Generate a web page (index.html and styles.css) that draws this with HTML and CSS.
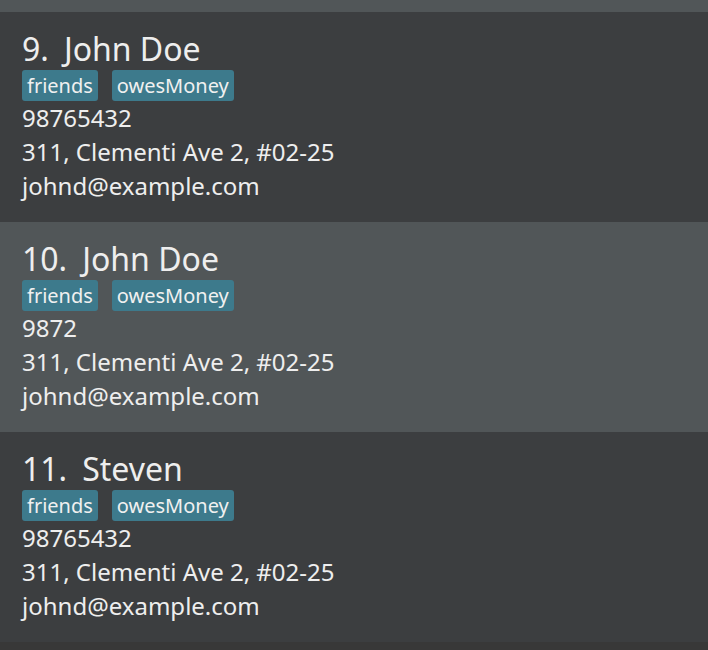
FILE: index.html
```html
<!DOCTYPE html>
<html>
<head>
<meta charset="utf-8">
<link rel="stylesheet" href="styles.css">
</head>
<body>
<div class="list">
  <div class="row row-light row-stub"></div>
  <div class="row row-dark">
    <div class="name"><span class="idx">9.</span><span>John Doe</span></div>
    <div class="tags"><span class="tag">friends</span><span class="tag">owesMoney</span></div>
    <div class="line">98765432</div>
    <div class="line">311, Clementi Ave 2, #02-25</div>
    <div class="line">johnd@example.com</div>
  </div>
  <div class="row row-light">
    <div class="name"><span class="idx">10.</span><span>John Doe</span></div>
    <div class="tags"><span class="tag">friends</span><span class="tag">owesMoney</span></div>
    <div class="line">9872</div>
    <div class="line">311, Clementi Ave 2, #02-25</div>
    <div class="line">johnd@example.com</div>
  </div>
  <div class="row row-dark">
    <div class="name"><span class="idx">11.</span><span>Steven</span></div>
    <div class="tags"><span class="tag">friends</span><span class="tag">owesMoney</span></div>
    <div class="line">98765432</div>
    <div class="line">311, Clementi Ave 2, #02-25</div>
    <div class="line">johnd@example.com</div>
  </div>
</div>
</body>
</html>
```
FILE: styles.css
```css
html, body {
  margin: 0;
  padding: 0;
  background: #383838;
  font-family: "Noto Sans", "Open Sans", sans-serif;
  color: #eeeeee;
}
.list {
  display: flex;
  flex-direction: column;
  width: 708px;
}
.row {
  box-sizing: border-box;
  height: 210px;
  padding: 17px 0 0 22px;
}
.row-stub {
  height: 12px;
  padding: 0;
}
.row-dark { background: #3c3e40; }
.row-light { background: #515658; }
.name {
  font-size: 32px;
  line-height: 40px;
  display: flex;
  gap: 15px;
}
.tags {
  display: flex;
  gap: 14px;
  margin-top: 1px;
}
.tag {
  background: #3d7a8c;
  border-radius: 3px;
  height: 31px;
  line-height: 31px;
  padding: 0 5px;
  font-size: 20px;
  color: #f0f0f0;
}
.line {
  font-size: 24px;
  line-height: 34px;
}
```
